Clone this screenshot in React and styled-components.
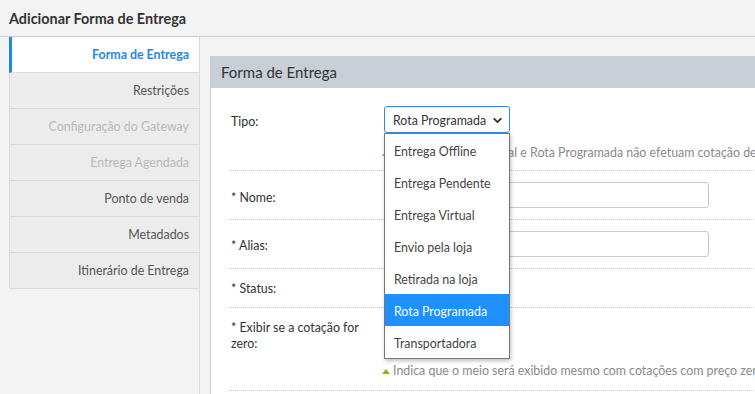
import React from 'react';
import styled, { createGlobalStyle } from 'styled-components';
import { ChevronDown } from 'lucide-react';

const Global = createGlobalStyle`
  html, body {
    margin: 0;
    padding: 0;
    overflow: hidden;
    background: #f3f3f3;
  }
  body {
    font-family: Lato, "Open Sans", sans-serif;
    font-size: 12.4px;
    color: #333;
  }
`;

const Page = styled.div`
  width: 1000px;
  height: 394px;
  display: flex;
  flex-direction: column;
`;

const TitleBar = styled.div`
  height: 36px;
  border-bottom: 1px solid #cbcbcb;
  display: flex;
  align-items: center;
  padding-left: 9px;
  font-weight: 700;
  font-size: 14.4px;
  color: #333;
`;

const Body = styled.div`
  flex: 1;
  display: flex;
`;

const Sidebar = styled.div`
  width: 190px;
  margin-left: 9px;
  border-right: 1px solid #dadada;
`;

const Tab = styled.div`
  height: 35px;
  border-bottom: 1px solid #dadada;
  border-left: ${({ active }) => (active ? '3px solid #1e88e5' : '1px solid #dadada')};
  background: ${({ active }) => (active ? '#fff' : '#ececec')};
  color: ${({ active, disabled }) => (active ? '#1e88e5' : disabled ? '#b9b9b9' : '#555')};
  font-weight: ${({ active }) => (active ? 700 : 400)};
  display: flex;
  align-items: center;
  justify-content: flex-end;
  padding-right: 10px;
`;

const Content = styled.div`
  flex: 1;
  padding: 19px 0 0 10px;
`;

const Panel = styled.div`
  height: 100%;
  background: #fff;
  border-left: 1px solid #cdcdcd;
`;

const PanelHeader = styled.div`
  height: 32px;
  background: #c8cfd6;
  display: flex;
  align-items: center;
  padding-left: 10px;
  font-size: 15px;
  color: #333;
`;

const Form = styled.div`
  padding-left: 18px;
`;

const Row = styled.div`
  display: flex;
  padding: ${({ pad }) => pad || '11px 0'};
  border-bottom: 1px dotted #c8c8c8;
`;

const Label = styled.div`
  width: 141px;
  padding: 0 12px 0 2px;
  line-height: 16px;
  padding-top: ${({ top }) => top || '7px'};
  color: #333;
`;

const Field = styled.div`
  display: flex;
  flex-direction: column;
  position: relative;
`;

const Control = styled.div`
  height: ${({ h }) => h || '26px'};
`;

const SelectBox = styled.div`
  height: 24px;
  width: 111px;
  border: 1px solid #2e8ae6;
  border-radius: 3px;
  display: flex;
  align-items: center;
  justify-content: space-between;
  padding: 1px 5px 0 8px;
  white-space: nowrap;
  color: #333;
`;

const Input = styled.div`
  width: 323px;
  height: 24px;
  border: 1px solid #c9c9c9;
  border-radius: 3px;
  background: #fff;
`;

const Help = styled.div`
  margin-top: ${({ mt }) => mt || '12px'};
  color: #8a8a8a;
  line-height: 16px;
  white-space: nowrap;
  display: flex;
  align-items: center;
  margin-left: -2px;
`;

const Arrow = styled.span`
  width: 0;
  height: 0;
  border-left: 4px solid transparent;
  border-right: 4px solid transparent;
  border-bottom: 5px solid #8cb31a;
  margin-right: 3px;
`;

const Menu = styled.div`
  position: absolute;
  top: 27px;
  left: 0;
  width: 124px;
  background: #fff;
  border: 1px solid #767676;
  box-shadow: 1px 2px 4px rgba(0, 0, 0, 0.25);
  z-index: 5;
`;

const Option = styled.div`
  height: 30px;
  padding-top: 2px;
  display: flex;
  align-items: center;
  padding-left: 9px;
  white-space: nowrap;
  background: ${({ selected }) => (selected ? '#1e90ff' : '#fff')};
  color: ${({ selected }) => (selected ? '#fff' : '#444')};
`;

const tabs = [
  { label: 'Forma de Entrega', active: true },
  { label: 'Restrições' },
  { label: 'Configuração do Gateway', disabled: true },
  { label: 'Entrega Agendada', disabled: true },
  { label: 'Ponto de venda' },
  { label: 'Metadados' },
  { label: 'Itinerário de Entrega' },
];

const options = [
  'Entrega Offline',
  'Entrega Pendente',
  'Entrega Virtual',
  'Envio pela loja',
  'Retirada na loja',
  'Rota Programada',
  'Transportadora',
];

export default () => (
  <Page>
    <Global />
    <TitleBar>Adicionar Forma de Entrega</TitleBar>
    <Body>
      <Sidebar>
        {tabs.map(t => (
          <Tab key={t.label} active={t.active} disabled={t.disabled}>
            {t.label}
          </Tab>
        ))}
      </Sidebar>
      <Content>
        <Panel>
          <PanelHeader>Forma de Entrega</PanelHeader>
          <Form>
            <Row pad="18px 0 9px">
              <Label top="8px">Tipo:</Label>
              <Field>
                <SelectBox>
                  <span>Rota Programada</span>
                  <ChevronDown size={13} strokeWidth={3.5} color="#333" />
                </SelectBox>
                <Menu>
                  {options.map(o => (
                    <Option key={o} selected={o === 'Rota Programada'}>
                      {o}
                    </Option>
                  ))}
                </Menu>
                <Help>
                  <Arrow />
                  Entrega Offline, Virtual e Rota Programada não efetuam cotação de frete.
                </Help>
              </Field>
            </Row>
            <Row>
              <Label top="8px">* Nome:</Label>
              <Field>
                <Input />
              </Field>
            </Row>
            <Row>
              <Label>* Alias:</Label>
              <Field>
                <Input />
              </Field>
            </Row>
            <Row pad="12px 0 10px">
              <Label top="0">* Status:</Label>
              <Field>
                <Control h="16px" />
              </Field>
            </Row>
            <Row pad="12px 0 11px">
              <Label top="0">* Exibir se a cotação for zero:</Label>
              <Field>
                <Control h="26px" />
                <Help mt="17px">
                  <Arrow />
                  Indica que o meio será exibido mesmo com cotações com preço zero.
                </Help>
              </Field>
            </Row>
          </Form>
        </Panel>
      </Content>
    </Body>
  </Page>
);
